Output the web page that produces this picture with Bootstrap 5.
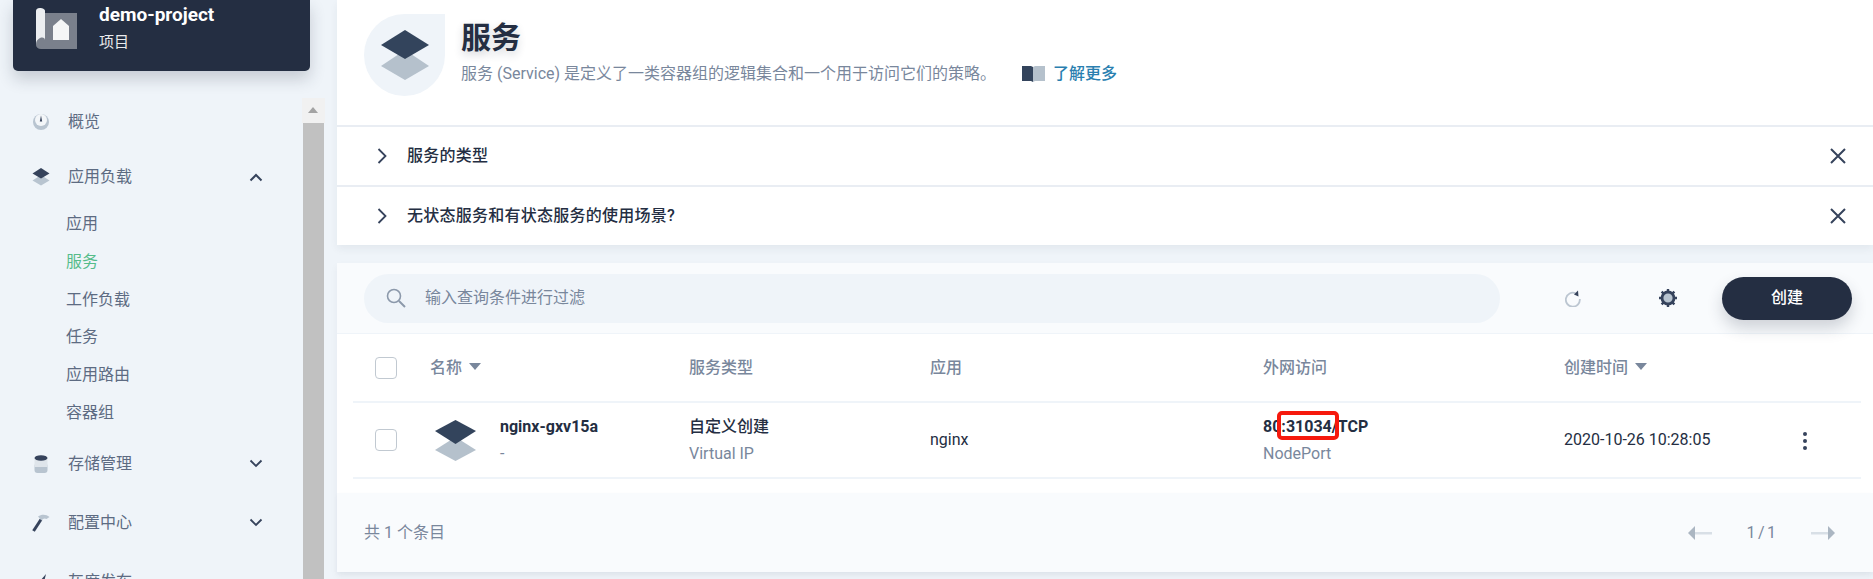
<!DOCTYPE html>
<html lang="en">
<head>
<meta charset="UTF-8">
<title>服务</title>
<link href="https://cdn.jsdelivr.net/npm/bootstrap@5.3.3/dist/css/bootstrap.min.css" rel="stylesheet">
<style>
  body { height: 579px; overflow: hidden; background: #eff4f9; color: #242e42; font: 16px/22px Roboto, "Noto Sans CJK SC", sans-serif; }
  .page-wrap { height: 579px; overflow: hidden; }

  /* sidebar */
  .side { width: 337px; flex: none; position: relative; height: 579px; overflow: hidden; }
  .proj-card { margin-left: 13px; width: 297px; height: 71px; background: #242e42; color: #fff; border-radius: 0 0 5px 5px; box-shadow: 0 8px 16px rgba(36,46,66,.2); padding-left: 23px; }
  .proj-name { font-weight: 700; font-size: 19px; line-height: 22px; margin-top: 4px; margin-left: -2px; }
  .proj-sub { font-size: 15px; line-height: 20px; margin-top: 6px; margin-left: -2px; opacity: .9; }
  .side-nav { padding: 29px 0 0 32px; width: 270px; color: #5d6b82; }
  .nav-main { height: 44px; }
  .nav-main svg.lead-ico { width: 18px; height: 18px; margin-right: 18px; }
  .nav-main .chev { margin-left: auto; margin-right: 7px; }
  .nav-gap { margin-bottom: 15px; }
  .nav-gap-s { margin-bottom: 11px; }
  .sub-list { margin: -4px 0 10px 34px; padding-top: 10px; }
  .sub-item { height: 37.8px; line-height: 37.8px; }
  .sub-item.on { color: #55bc8a; }
  .fake-scroll { position: absolute; left: 302px; top: 98px; width: 23px; bottom: 0; }
  .fake-scroll-btn { height: 25px; background: #f1f1f1; position: relative; }
  .fake-scroll-btn::after { content: ""; position: absolute; left: 6px; top: 9px; border: 5.5px solid transparent; border-top: 0; border-bottom: 6px solid #a3a3a3; }
  .fake-scroll-bar { height: 500px; margin: 0 1px; background: #c1c1c1; }

  /* main */
  .main-col { flex: 1; min-width: 0; }
  .head-box { background: #fff; box-shadow: 0 4px 8px rgba(36,46,66,.06); }
  .head-top { height: 125px; padding: 14px 0 0 27px; }
  .blob { width: 81px; height: 82px; background: #eff4f9; border-radius: 50% 0 50% 50%; flex: none; }
  .head-title { font-size: 30px; line-height: 38px; font-weight: 700; margin: 5px 0 0 0; text-shadow: 0 4px 8px rgba(36,46,66,.2); }
  .head-desc { color: #79879c; margin-top: 6px; }
  .more-link { color: #2a7fb0; font-weight: 500; text-decoration: none; margin-left: 26px; }
  .acc-row { height: 60px; border-top: 2px solid #e9edf3; padding: 0 26px 0 40px; font-weight: 500; }
  .acc-row .acc-label { margin-left: 20px; letter-spacing: .25px; }
  .table-box { margin-top: 18px; background: #fff; box-shadow: 0 4px 8px rgba(36,46,66,.05); }
  .tool-row { height: 71px; background: #f9fbfd; border-bottom: 1px solid #eff4f9; padding: 0 21px 0 27px; }
  .search-box { width: 1136px; height: 49px; border-radius: 25px; background: #eff4f9; color: #79879c; padding-left: 22px; }
  .search-box span { margin-left: 19px; }
  .tool-ico1 { margin-left: 65px; }
  .tool-ico2 { margin-left: 78px; }
  .create-btn { margin-left: 45px; width: 130px; height: 43px; padding: 0; background: #242e42; color: #fff; border: 0; border-radius: 22px; font-weight: 500; box-shadow: 0 8px 16px rgba(36,46,66,.2); }
  .list-wrap { height: 159px; padding: 0 12px 0 16px; }
  .svc-table { width: 100%; table-layout: fixed; margin: 0; }
  .svc-table th { height: 68px; font-weight: 500; color: #79879c; vertical-align: middle; border-bottom: 2px solid #eff4f9; padding: 0; }
  .svc-table td { height: 76px; vertical-align: middle; border-bottom: 2px solid #eff4f9; padding: 0; }
  .cb-box { width: 22px; height: 22px; margin: 0 0 0 22px; border: 1px solid #c1c9d1; border-radius: 4px; background: #fff; float: none; display: block; }
  .caret-dn { display: inline-block; margin-left: 7px; vertical-align: 3px; border: 6.5px solid transparent; border-bottom: 0; border-top: 7px solid #79879c; }
  .cell-sub { color: #79879c; line-height: 22px; margin-top: 5px; }
  .cell-strong { font-weight: 500; line-height: 22px; }
  .cell-bold { font-weight: 700; line-height: 22px; }
  .name-txt { margin-left: 24px; }
  .name-head { margin-left: -1px; }
  .port-mark { position: relative; }
  .port-mark::after { content: ""; position: absolute; left: -9px; right: -7px; top: -6px; bottom: -4px; border: 4px solid #f6190d; border-radius: 5px; }
  .foot-row { height: 79px; background: #f9fbfd; padding: 0 38px 0 27px; color: #79879c; box-shadow: 0 2px 4px rgba(36,46,66,.04); }
  .page-num { margin: 0 35px 0 34px; word-spacing: -1.5px; }
</style>
</head>
<body>
<div class="d-flex page-wrap">

  <!-- sidebar -->
  <div class="side">
    <div class="proj-card d-flex">
      <svg width="41" height="41" viewBox="0 0 41 41" class="mt-2 flex-none">
        <path d="M9 5H41V41H5C2 41 0 39 0 37V3C0 1 2 0 4 0S9 1 9 3Z" fill="#7a808c"/>
        <path d="M0 3C0 1 2 0 4 0S9 1 9 3V32C9 30 7 29 4 30 2 31 0 33 0 36Z" fill="#eceef1"/>
        <path d="M17 18 25 11 33 18V32H17Z" fill="#f5f6f7"/>
      </svg>
      <div class="ms-4">
        <div class="proj-name">demo-project</div>
        <div class="proj-sub">项目</div>
      </div>
    </div>

    <div class="side-nav">
      <div class="nav-main nav-gap-s d-flex align-items-center">
        <svg class="lead-ico" viewBox="0 0 18 18"><circle cx="9" cy="9" r="8" fill="#b8c4d0"/><circle cx="9" cy="7" r="6" fill="#f3f6f9"/><path d="M9 2.500 10.200 8.500H7.800Z" fill="#36435c"/></svg>
        <span>概览</span>
      </div>
      <div class="nav-main d-flex align-items-center">
        <svg class="lead-ico" viewBox="0 0 18 18"><path d="M9 7 17.500 12.500 9 17.500 .5 12.500Z" fill="#b8c4d0"/><path d="M9 0 17.500 5.500 9 10.500 .5 5.500Z" fill="#36435c"/></svg>
        <span>应用负载</span>
        <svg class="chev" width="14" height="9" viewBox="0 0 14 9"><path d="M1.500 7.500 7 2 12.500 7.500" fill="none" stroke="#36435c" stroke-width="2"/></svg>
      </div>
      <div class="sub-list">
        <div class="sub-item">应用</div>
        <div class="sub-item on">服务</div>
        <div class="sub-item">工作负载</div>
        <div class="sub-item">任务</div>
        <div class="sub-item">应用路由</div>
        <div class="sub-item">容器组</div>
      </div>
      <div class="nav-main nav-gap d-flex align-items-center">
        <svg class="lead-ico" viewBox="0 0 18 18"><rect x="2.500" y="8" width="13" height="10" rx="3" fill="#b8c4d0"/><rect x="2.500" y="3" width="13" height="9" fill="#dfe5eb"/><ellipse cx="9" cy="3" rx="6.500" ry="2.800" fill="#36435c"/></svg>
        <span>存储管理</span>
        <svg class="chev" width="14" height="9" viewBox="0 0 14 9"><path d="M1.500 1.500 7 7 12.500 1.500" fill="none" stroke="#36435c" stroke-width="1.800"/></svg>
      </div>
      <div class="nav-main nav-gap d-flex align-items-center">
        <svg class="lead-ico" viewBox="0 0 18 18"><path d="M1.500 17 9 5.500" stroke="#36435c" stroke-width="3"/><path d="M6 2.500C9.500 0 14 0 17.500 3L14.500 5C12.500 3.800 11 4.500 9.500 6.500Z" fill="#b8c4d0"/></svg>
        <span>配置中心</span>
        <svg class="chev" width="14" height="9" viewBox="0 0 14 9"><path d="M1.500 1.500 7 7 12.500 1.500" fill="none" stroke="#36435c" stroke-width="1.800"/></svg>
      </div>
      <div class="nav-main d-flex align-items-center">
        <svg class="lead-ico" viewBox="0 0 18 18"><path d="M1 15 8 8 14 1 12 9 17 11 9 11 5 17Z" fill="#36435c"/></svg>
        <span>灰度发布</span>
      </div>
    </div>

    <div class="fake-scroll">
      <div class="fake-scroll-btn"></div>
      <div class="fake-scroll-bar"></div>
    </div>
  </div>

  <!-- main content -->
  <div class="main-col">
    <div class="head-box">
      <div class="head-top d-flex">
        <div class="blob d-flex align-items-center justify-content-center">
          <svg width="50" height="50" viewBox="0 0 50 50"><path d="M25 20 49 36 25 50 1 36Z" fill="#b5c1cc"/><path d="M25 0 49 15 25 29 1 15Z" fill="#33445c"/></svg>
        </div>
        <div class="ms-3">
          <h1 class="head-title">服务</h1>
          <div class="head-desc d-flex align-items-center">
            <span>服务 (Service) 是定义了一类容器组的逻辑集合和一个用于访问它们的策略。</span>
            <a class="more-link d-flex align-items-center gap-2" href="#">
              <svg width="23" height="16" viewBox="0 0 23 16"><path d="M0 0H9L11 1V16L9 15H0Z" fill="#33445c"/><path d="M11 1 13 0H23V15H13L11 16Z" fill="#b5c1cc"/></svg>
              了解更多
            </a>
          </div>
        </div>
      </div>
      <div class="acc-row d-flex align-items-center">
        <svg width="10" height="16" viewBox="0 0 10 16"><path d="M1.500 1 8.500 8 1.500 15" fill="none" stroke="#36435c" stroke-width="1.800"/></svg>
        <span class="acc-label">服务的类型</span>
        <svg class="ms-auto" width="18" height="18" viewBox="0 0 18 18"><path d="M2 2 16 16M16 2 2 16" stroke="#36435c" stroke-width="2"/></svg>
      </div>
      <div class="acc-row d-flex align-items-center">
        <svg width="10" height="16" viewBox="0 0 10 16"><path d="M1.500 1 8.500 8 1.500 15" fill="none" stroke="#36435c" stroke-width="1.800"/></svg>
        <span class="acc-label">无状态服务和有状态服务的使用场景?</span>
        <svg class="ms-auto" width="18" height="18" viewBox="0 0 18 18"><path d="M2 2 16 16M16 2 2 16" stroke="#36435c" stroke-width="2"/></svg>
      </div>
    </div>

    <div class="table-box">
      <div class="tool-row d-flex align-items-center">
        <div class="search-box d-flex align-items-center">
          <svg width="20" height="20" viewBox="0 0 20 20"><circle cx="8" cy="8" r="6.500" fill="none" stroke="#8c99ab" stroke-width="1.600"/><path d="M13 13 19 19" stroke="#8c99ab" stroke-width="2"/></svg>
          <span>输入查询条件进行过滤</span>
        </div>
        <svg class="tool-ico1" width="16" height="17" viewBox="0 0 16 17"><path d="M10.500 3.200A7 7 0 1 0 14.800 9" fill="none" stroke="#bcc6d1" stroke-width="1.800"/><path d="M9 4.500 13 0.500 13.500 6.500Z" fill="#36435c"/></svg>
        <svg class="tool-ico2" width="18" height="18" viewBox="0 0 18 18"><circle cx="9" cy="9" r="6" fill="#b8c4d0" stroke="#36435c" stroke-width="2.800"/><path d="M9 0V3M9 15V18M0 9H3M15 9H18M2.600 2.600 4.700 4.700M13.300 13.300 15.400 15.400M2.600 15.400 4.700 13.300M13.300 4.700 15.400 2.600" stroke="#36435c" stroke-width="2.400"/></svg>
        <button class="create-btn" type="button">创建</button>
      </div>

      <div class="list-wrap">
        <table class="svc-table">
          <colgroup>
            <col style="width:78px"><col style="width:258px"><col style="width:241px"><col style="width:333px"><col style="width:301px"><col style="width:238px"><col>
          </colgroup>
          <thead>
            <tr>
              <th><input class="form-check-input cb-box" type="checkbox"></th>
              <th><span class="name-head">名称</span><span class="caret-dn"></span></th>
              <th>服务类型</th>
              <th>应用</th>
              <th>外网访问</th>
              <th>创建时间<span class="caret-dn"></span></th>
              <th></th>
            </tr>
          </thead>
          <tbody>
            <tr>
              <td><input class="form-check-input cb-box" type="checkbox"></td>
              <td>
                <div class="d-flex align-items-center">
                  <svg width="41" height="41" viewBox="0 0 41 41" class="ms-1 flex-none"><path d="M20.500 17 41 30 20.500 41 0 30Z" fill="#b5c1cc"/><path d="M20.500 0 41 11 20.500 24 0 11Z" fill="#33445c"/></svg>
                  <div class="name-txt">
                    <div class="cell-bold">nginx-gxv15a</div>
                    <div class="cell-sub">-</div>
                  </div>
                </div>
              </td>
              <td>
                <div class="cell-strong">自定义创建</div>
                <div class="cell-sub">Virtual IP</div>
              </td>
              <td>nginx</td>
              <td>
                <div class="cell-bold">80:<span class="port-mark">31034</span>/TCP</div>
                <div class="cell-sub">NodePort</div>
              </td>
              <td>2020-10-26 10:28:05</td>
              <td>
                <svg width="6" height="20" viewBox="0 0 6 20"><circle cx="3" cy="3" r="2" fill="#36435c"/><circle cx="3" cy="10" r="2" fill="#36435c"/><circle cx="3" cy="17" r="2" fill="#36435c"/></svg>
              </td>
            </tr>
          </tbody>
        </table>
      </div>

      <div class="foot-row d-flex align-items-center">
        <span>共 1 个条目</span>
        <div class="ms-auto d-flex align-items-center">
          <svg width="24" height="14" viewBox="0 0 24 14"><path d="M7 6H24V8.500H7Z" fill="#d8dfe6"/><path d="M7 0V14L0 7Z" fill="#abb6c2"/></svg>
          <span class="page-num">1 / 1</span>
          <svg width="24" height="14" viewBox="0 0 24 14"><path d="M0 6H17V8.500H0Z" fill="#d8dfe6"/><path d="M17 0V14L24 7Z" fill="#abb6c2"/></svg>
        </div>
      </div>
    </div>
  </div>
</div>
<script src="https://cdn.jsdelivr.net/npm/bootstrap@5.3.3/dist/js/bootstrap.bundle.min.js"></script>
</body>
</html>
